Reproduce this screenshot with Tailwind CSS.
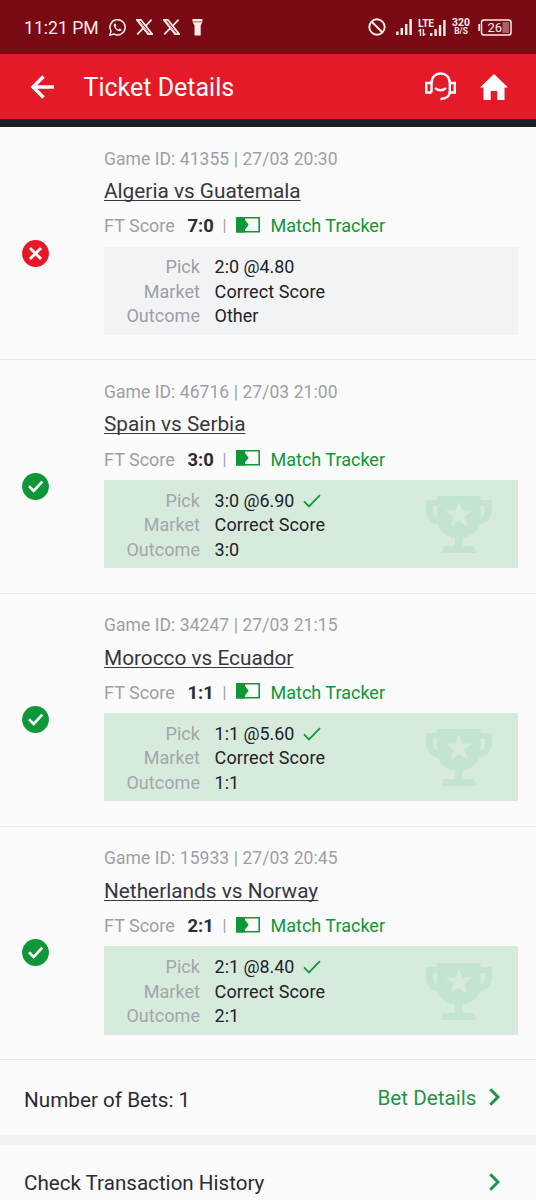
<!DOCTYPE html>
<html lang="en">
<head>
<meta charset="utf-8">
<title>Ticket Details</title>
<script src="https://cdn.jsdelivr.net/npm/@tailwindcss/browser@4"></script>
</head>
<body class="bg-[#fbfbfb] font-['Roboto',sans-serif] text-[#2a2b33] w-[536px] h-[1200px] overflow-hidden">
<svg class="hidden">
  <symbol id="x-logo" viewBox="0 0 16 15"><path d="M.8.8h3.900l10.500 13.400h-3.900zM14.600.6 9 6.700M6.800 8.600 1.200 14.400" fill="none" stroke="currentColor" stroke-width="1.600"/><path d="M2.600 1.200 12.800 14" stroke="currentColor" stroke-width=".7"/></symbol>
  <symbol id="signal" viewBox="0 0 16 16"><path d="M1.400 12.500V16M5.800 9V16M10.200 5V16M14.600 0V16" stroke="currentColor" stroke-width="2.500"/></symbol>
  <symbol id="lost" viewBox="0 0 27 27"><circle cx="13.500" cy="13.500" r="13.400" fill="#e41827"/><path d="m8 8 11 11M19 8 8 19" stroke="#fff" stroke-width="2.900"/></symbol>
  <symbol id="won" viewBox="0 0 27 27"><circle cx="13.500" cy="13.500" r="13.400" fill="#0d9737"/><path d="m7 13.200 4.700 4.700 8.600-9.200" fill="none" stroke="#fff" stroke-width="2.700"/></symbol>
  <symbol id="tracker" viewBox="0 0 24 16"><path d="M.8.8h22.400v13.900H.8z" fill="none" stroke="#0d9737" stroke-width="1.600"/><path d="M0 0h9v3l3.700 4.800L9 12.500v3H0z" fill="#0d9737"/></symbol>
  <symbol id="tick" viewBox="0 0 18 14"><path d="m1 7.400 5 5L17 1.200" fill="none" stroke="#12973a" stroke-width="1.800"/></symbol>
  <symbol id="trophy" viewBox="0 0 66 57"><path fill-rule="evenodd" d="M11 0h43.500v4H66v9c0 8-4 14.500-12.500 15.500C51 36 44 40.500 36.700 41.500V50H48l3 7H15l3-7h11V41.500C21 40.500 14.500 36 12 28.500 4 27.500 0 21 0 13V4h11zM7 10v4c0 4 1.500 6.500 4.300 7.500V10zM59 10h-4.500v11.500C57.500 20.500 59 18 59 14zM33 5.500l-3.400 9H19.500l8 6.300-3 10L33 25l8.500 5.800-3-10 8-6.300H36.400z" fill="#c3e4ce"/></symbol>
  <symbol id="chevron" viewBox="0 0 11 18"><path d="m1.300 1.300 7.700 7.700-7.700 7.700" fill="none" stroke="#1c9644" stroke-width="3"/></symbol>
</svg>

<div class="h-[54px] bg-[#790912] text-[#fbecec] flex items-center pl-[24px] pr-[24px]">
  <span class="text-[17.600px] leading-[24px] w-[85px] whitespace-nowrap mt-px">11:21 PM</span>
  <svg class="w-[17px] h-[17px]" viewBox="0 0 17 17" fill="none" stroke="currentColor"><path d="M.9 16.100 2 12.100A7.600 7.600 0 1 1 5 15z" stroke-width="1.500"/><path d="M5.400 4.700c-.9.9-.9 2.300.2 4 1.300 2 3 3.200 4.700 3.500 1.100.1 2.100-.5 2.300-1.700l-2-1.100-1.200 1.100C8 10 7 8.900 6.500 7.700l.8-1.100-.8-2z" fill="currentColor" stroke="none"/></svg>
  <svg class="w-[17px] h-[16px] ml-[10px]"><use href="#x-logo"/></svg>
  <svg class="w-[17px] h-[16px] ml-[10px]"><use href="#x-logo"/></svg>
  <svg class="w-[11px] h-[17px] ml-[12px]" viewBox="0 0 11 17" fill="currentColor"><path d="M.5 0h10v2H.5z"/><path d="M.5 2h10v1.200H.5z" opacity=".6"/><path d="M.7 3.200h9.600L8.700 6.500V16.500H2.500V6.500z"/></svg>

  <svg class="w-[18px] h-[18px] ml-auto" viewBox="0 0 18 18" fill="none" stroke="currentColor" stroke-width="1.900"><circle cx="9" cy="9" r="7.700"/><path d="m3.500 3.500 11 11"/></svg>
  <svg class="w-[16px] h-[16px] ml-[10px]"><use href="#signal"/></svg>
  <div class="ml-[6px] w-[28px] h-[17px] flex items-end">
    <div class="w-[12px] h-[17px] flex flex-col">
      <span class="text-[10.300px] leading-[9px] font-bold tracking-[-0.300px]">LTE</span>
      <svg class="w-[8px] h-[7px] mt-px" viewBox="0 0 8 7" fill="none" stroke="currentColor" stroke-width="1.400"><path d="M.5 2.200 2.500.7V7M5.400 0v6.300l2-1.600"/></svg>
    </div>
    <svg class="w-[16px] h-[16px]" viewBox="0 0 16 16"><path d="M1.200 13V16M5.600 9V16M10 5V16M14.400 0V16" stroke="currentColor" stroke-width="2.400"/></svg>
  </div>
  <div class="ml-[6px] w-[18px] flex flex-col items-center font-bold">
    <span class="text-[10.400px] leading-[9px]">320</span>
    <span class="text-[8.400px] leading-[9px]">B/S</span>
  </div>
  <svg class="w-[34px] h-[17px] ml-[8px]" viewBox="0 0 34 17"><path d="M1.200 5v7" stroke="currentColor" stroke-width="1.800"/><rect x="3.500" y=".9" width="29.500" height="15" rx="2.500" fill="none" stroke="currentColor" stroke-width="1.500"/><path d="M24.500 3h6.500v11h-6.500z" fill="#a96066"/><text x="9.500" y="13" font-size="13" fill="currentColor">26</text></svg>
</div>

<header class="h-[65px] bg-[#e51a28] text-white flex items-center pl-[30px] pr-[28px]">
  <svg class="w-[24px] h-[24px]" viewBox="0 0 24 24" fill="none" stroke="currentColor" stroke-width="3.400"><path d="M13.500 1.500 3 12l10.500 10.500M2.500 12H24"/></svg>
  <h1 class="ml-[29.500px] text-[25px] leading-[32px] mt-[2px]">Ticket Details</h1>
  <svg class="ml-auto w-[31px] h-[29px]" viewBox="0 0 31 29" fill="none" stroke="currentColor" stroke-width="2.400"><path d="M6.500 20.500V11C6.500 5 10.500 1.500 15.600 1.500S24.800 5 24.800 11v8c0 5-3.500 8-9.300 8M6.500 11H1.200v9.500h5.300M24.800 11h5v9.500h-5.500M10.200 16c2.500 3 8.200 3 10.700 0"/></svg>
  <svg class="ml-[24px] w-[28px] h-[26px]" viewBox="0 0 28 26" fill="currentColor"><path d="M14 0 28 13.500h-3.500V26h-7.200v-9h-6.600v9H3.500V13.500H0z"/></svg>
</header>
<div class="h-[8px] bg-[#1b1d27]"></div>

<main id="bets"></main>

<section class="h-[74.500px] pl-[24px] pr-[36px] flex items-center">
  <span class="text-[20.700px] leading-[28px] mt-[5px]">Number of Bets: 1</span>
  <span class="ml-auto text-[20.700px] leading-[28px] text-[#1c9644] mt-[2px]">Bet Details</span>
  <svg class="w-[11px] h-[18px] ml-[12.500px]"><use href="#chevron"/></svg>
</section>
<div class="h-[10.500px] bg-[#f1f2f4]"></div>
<section class="h-[74px] pl-[24px] pr-[36px] flex items-center">
  <span class="text-[20.600px] leading-[28px] mt-[2px]">Check Transaction History</span>
  <svg class="w-[11px] h-[18px] ml-auto"><use href="#chevron"/></svg>
</section>

<script>
const bets = [
  { id: '41355 | 27/03 20:30', match: 'Algeria vs Guatemala', score: '7:0', pick: '2:0 @4.80', outcome: 'Other', won: false },
  { id: '46716 | 27/03 21:00', match: 'Spain vs Serbia', score: '3:0', pick: '3:0 @6.90', outcome: '3:0', won: true },
  { id: '34247 | 27/03 21:15', match: 'Morocco vs Ecuador', score: '1:1', pick: '1:1 @5.60', outcome: '1:1', won: true },
  { id: '15933 | 27/03 20:45', match: 'Netherlands vs Norway', score: '2:1', pick: '2:1 @8.40', outcome: '2:1', won: true },
];
document.getElementById('bets').innerHTML = bets.map(b => `
  <article class="h-[233.250px] border-b border-[#e6e7e9] flex">
    <div class="w-[104px] pl-[22px] pt-[20px] flex items-center"><svg class="w-[27px] h-[27px]"><use href="#${b.won ? 'won' : 'lost'}"/></svg></div>
    <div class="w-[414px] pt-[19.700px]">
      <div class="text-[17.500px] leading-[24px] tracking-[0.060px] text-[#9c9fa8]">Game ID: ${b.id}</div>
      <div class="mt-[5.400px] text-[20.800px] leading-[30px] text-[#353741] underline decoration-1 underline-offset-[2px] [text-decoration-skip-ink:none]">${b.match}</div>
      <div class="mt-[8.200px] flex items-center leading-[24px] text-[18px] text-[#9c9fa8]">
        <span class="w-[83.500px]">FT Score</span>
        <span class="w-[35px] font-bold text-[#2a2b33] text-[18.400px]">${b.score}</span>
        <span class="w-[13.500px] text-[16px]">|</span>
        <svg class="w-[24px] h-[16px] -mt-[3px]"><use href="#tracker"/></svg>
        <span class="ml-[10.500px] text-[18px] text-[#0d9737]">Match Tracker</span>
      </div>
      <div class="mt-[8.400px] h-[88.300px] flex pt-[8.600px] ${b.won ? 'bg-[#d7ebdd]' : 'bg-[#f2f3f5]'} text-[18px] leading-[24.600px]">
        <div class="w-[96px] text-right tracking-[0.050px] text-[#9c9fa8] ${b.won ? 'opacity-90' : ''}"><div>Pick</div><div>Market</div><div>Outcome</div></div>
        <div class="ml-[14.600px] text-[#202228]">
          <div class="flex items-center"><span class="w-[88px] text-[17.900px]">${b.pick}</span>${b.won ? '<svg class="w-[18px] h-[14px]"><use href="#tick"/></svg>' : ''}</div>
          <div class="tracking-[0.100px]">Correct Score</div>
          <div>${b.outcome}</div>
        </div>
        ${b.won ? '<svg class="w-[66px] h-[57px] ml-auto mr-[26px] mt-[7.500px]"><use href="#trophy"/></svg>' : ''}
      </div>
    </div>
  </article>`).join('');
</script>
</body>
</html>
